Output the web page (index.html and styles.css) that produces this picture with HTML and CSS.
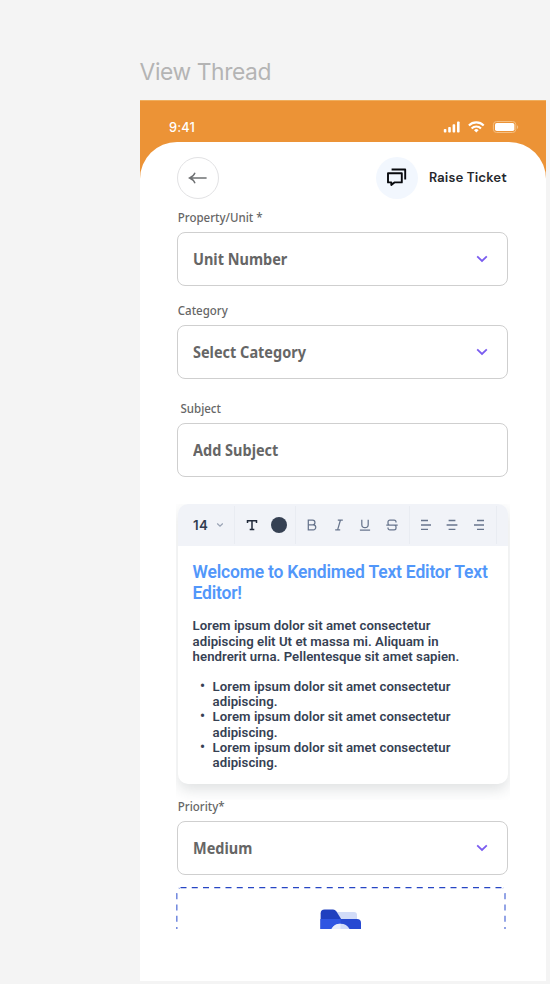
FILE: index.html
```html
<!DOCTYPE html>
<html lang="en">
<head>
<meta charset="utf-8">
<title>View Thread</title>
<link rel="stylesheet" href="styles.css">
</head>
<body>
<h1 class="frame-title">View Thread</h1>
<main class="phone">
  <header class="status">
    <span class="time">9:41</span>
    <svg class="status-icons" width="76" height="14" viewBox="0 0 76 14">
      <g fill="#fff">
        <rect x="0.8" y="9" width="2.6" height="3.6" rx=".8"/>
        <rect x="5.2" y="7" width="2.6" height="5.6" rx=".8"/>
        <rect x="9.6" y="4.2" width="2.6" height="8.4" rx=".8"/>
        <rect x="14" y="1.4" width="2.6" height="11.2" rx=".8"/>
      </g>
      <g fill="none" stroke="#fff" stroke-width="2.1">
        <path d="M25.9 5.5a10.3 10.3 0 0 1 14.8 0"/>
        <path d="M28.6 8.4a6.6 6.6 0 0 1 9.4 0"/>
      </g>
      <path d="M33.3 12.6l-2.3-2.4a3.3 3.3 0 0 1 4.6 0z" fill="#fff"/>
      <rect x="50.4" y="1.5" width="22.4" height="11" rx="3.2" fill="none" stroke="#f5c083" stroke-width="1"/>
      <rect x="52" y="3" width="19.4" height="8" rx="1.8" fill="#fff"/>
      <path d="M74 5.2v3.8q1.2-.6 1.2-1.9t-1.2-1.9z" fill="#f5c083"/>
    </svg>
  </header>
  <section class="sheet">
    <nav class="nav">
      <span class="back"><svg width="20" height="14" viewBox="0 0 20 14" fill="none" stroke="#6f7173" stroke-width="1.4"><path d="M18.6 7H2M7 1.800Q5.800 5.200 1.600 7Q5.800 8.800 7 12.200"/></svg></span>
      <span class="chat"><svg width="22" height="22" viewBox="0 0 22 22" fill="none" stroke="#080a0e" stroke-width="1.900" stroke-linejoin="round"><path d="M2 6.200h13.800v9.200H8.400L5.300 18v-2.600H2z"/><path d="M5.600 2.500h13.600v9.900"/></svg></span>
      <span class="nav-title">Raise Ticket</span>
    </nav>

    <div class="field f-unit"><label>Property/Unit *</label><div class="box"><span>Unit Number</span><svg class="chev" width="12" height="8" viewBox="0 0 12 8"><path d="M1.200 1.300L6 5.900L10.800 1.300"/></svg></div></div>
    <div class="field f-category"><label>Category</label><div class="box"><span>Select Category</span><svg class="chev" width="12" height="8" viewBox="0 0 12 8"><path d="M1.200 1.300L6 5.900L10.800 1.300"/></svg></div></div>
    <div class="field f-subject"><label>Subject</label><div class="box"><span>Add Subject</span></div></div>

    <div class="editor-wrap">
      <div class="editor">
        <div class="toolbar">
          <div class="group g-size"><span class="size">14</span><svg width="8" height="6" viewBox="0 0 8 6" fill="none" stroke="#9aa4b5" stroke-width="1.300"><path d="M1.200 1.500L4 4.200L6.800 1.500"/></svg></div>
          <div class="group g-color">
            <svg width="12" height="12" viewBox="0 0 12 12" fill="none" stroke="#20293a" stroke-width="1.500"><path d="M1.500 4V1.700h9V4M6 1.700v8.800M3.700 10.500h4.600"/></svg>
            <i class="swatch"></i>
          </div>
          <div class="group g-style">
            <svg width="12" height="12" viewBox="0 0 12 12"><path d="M2.300 1.200h4.300a2.300 2.300 0 0 1 0 4.700H2.300zM2.300 5.900h5a2.400 2.400 0 0 1 0 4.900h-5z"/></svg>
            <svg width="12" height="12" viewBox="0 0 12 12"><path d="M4.800 1.200h5M2.200 10.800h5M7.400 1.200L4.600 10.800"/></svg>
            <svg width="12" height="12" viewBox="0 0 12 12"><path d="M2.800 .8v4.600a3.200 3.200 0 0 0 6.400 0V.8M.9 11.200h10.200"/></svg>
            <svg width="12" height="12" viewBox="0 0 12 12"><path d="M10 3.600V3a1.900 1.900 0 0 0-1.900-1.900H3.900A1.900 1.900 0 0 0 2 3v1.200A1.800 1.800 0 0 0 3.800 6h4.400A1.800 1.800 0 0 1 10 7.800V9a1.900 1.900 0 0 1-1.900 1.900H3.900A1.900 1.900 0 0 1 2 9v-.6M.3 6h11.400"/></svg>
          </div>
          <div class="group g-align">
            <svg width="12" height="12" viewBox="0 0 12 12"><path d="M1 1.500h7M1 6h10M1 10.300h7"/></svg>
            <svg width="12" height="12" viewBox="0 0 12 12"><path d="M2.600 1.500h6.800M.6 6h10.800M2.600 10.300h6.800"/></svg>
            <svg width="12" height="12" viewBox="0 0 12 12"><path d="M4 1.500h7M1 6h10M4 10.300h7"/></svg>
          </div>
        </div>
        <div class="copy">
          <h2>Welcome to Kendimed Text Editor Text<br>Editor!</h2>
          <p>Lorem ipsum dolor sit amet consectetur<br>adipiscing elit Ut et massa mi. Aliquam in<br>hendrerit urna. Pellentesque sit amet sapien.</p>
          <ul>
            <li>Lorem ipsum dolor sit amet consectetur<br>adipiscing.</li>
            <li>Lorem ipsum dolor sit amet consectetur<br>adipiscing.</li>
            <li>Lorem ipsum dolor sit amet consectetur<br>adipiscing.</li>
          </ul>
        </div>
      </div>
    </div>

    <div class="field f-priority"><label>Priority*</label><div class="box"><span>Medium</span><svg class="chev" width="12" height="8" viewBox="0 0 12 8"><path d="M1.200 1.300L6 5.900L10.800 1.300"/></svg></div></div>

    <svg class="upload" width="332" height="42" viewBox="0 0 332 42">
      <path d="M4.500 .6H327" fill="none" stroke="#2746c4" stroke-width="1.200" stroke-dasharray="6 5.250"/>
      <path d="M.8 43V7Q.8 3 3.500 1M329 43V7Q329 3 327 1" fill="none" stroke="#7087de" stroke-width="1.500" stroke-dasharray="6 5.250" stroke-dashoffset="3"/>
      <path d="M158 25h20a3 3 0 0 1 3 3v10h-23z" fill="#d2dcf8"/>
      <path d="M144.600 43V26.500a4 4 0 0 1 4-4h8.500q2 0 3.200 1.700l4.800 7.800V43z" fill="#2040bf"/>
      <path d="M144.600 32h36.400a4 4 0 0 1 4 4v8H144.600z" fill="#2749d2"/>
      <path d="M144.600 32h20v12h-20z" fill="#3056e2"/>
      <path d="M155 43a10.300 10.300 0 0 1 19 0z" fill="#d2dcf8"/>
      <path d="M155 43a10.300 10.300 0 0 1 9.500-6.200v6.200z" fill="#e9eefb"/>
    </svg>
  </section>
</main>
</body>
</html>
```
FILE: styles.css
```css
* { box-sizing: border-box; }
body { margin: 0; height: 984px; overflow: hidden; background: #f4f4f4; padding-left: 139.6px; }
.frame-title { margin: 0; height: 100px; padding-top: 58px; font: 400 22.8px/28px Inter, sans-serif; letter-spacing: -.4px; color: #b4b4b4; white-space: nowrap; }
.phone { width: 406.600px; height: 881px; background: #ec9336; border-top: 1px solid #efae5e; }
.status { height: 41px; display: flex; align-items: flex-start; justify-content: space-between; padding: 19px 27.500px 0 29.400px; }
.time { font: 500 12.800px/15px Inter, sans-serif; letter-spacing: .2px; color: #fff; }
.sheet { height: 839px; background: #fff; border-radius: 37px 37px 0 0; padding: 15px 37.400px 0 37.400px; }
.nav { height: 42px; display: flex; align-items: center; }
.back, .chat { width: 42px; height: 42px; border-radius: 50%; display: flex; align-items: center; justify-content: center; }
.back { border: 1px solid #e2e2e4; }
.chat { background: #f2f7fe; margin-left: 157.500px; }
.nav-title { margin-left: 10.500px; font: 600 13.300px/18px "DM Sans", Inter, sans-serif; letter-spacing: .1px; color: #25272b; white-space: nowrap; }
.field { color: #666; font-family: "Noto Sans", sans-serif; }
.field label { display: block; height: 16px; font-size: 11.700px; line-height: 17px; font-weight: 500; padding-left: .8px; transform: scaleX(.985); transform-origin: left; }
.box { width: 331.500px; height: 54px; margin-top: 6.500px; border: 1px solid #cfcfcf; border-radius: 8px; display: flex; align-items: center; justify-content: space-between; padding: 0 19.600px 0 14.800px; font-size: 16px; font-weight: 700; }
.box span { transform: scaleX(.905); transform-origin: left; }
.chev { fill: none; stroke: #7a5cf0; stroke-width: 1.800; }
.f-unit { margin-top: 10px; }
.f-category { margin-top: 16.500px; }
.f-subject { margin-top: 21.500px; }
.f-subject label { padding-left: 3.500px; }
.editor-wrap { width: 334.400px; height: 296px; margin: 27px 0 0 -1.400px; padding: 0 2px; overflow: hidden; }
.editor { height: 280.500px; background: #fff; border-radius: 10px; overflow: hidden; box-shadow: 0 6px 14px rgba(50,60,65,.15); }
.toolbar { height: 42px; background: #f1f3f8; display: flex; align-items: center; }
.group { height: 38px; display: flex; align-items: center; border-right: 1px solid #e9ecf2; }
.g-size { width: 57.600px; padding-left: 15.400px; gap: 7.500px; }
.size { font: 600 13.300px/16px Inter, sans-serif; letter-spacing: .3px; color: #323d50; }
.g-color { width: 60.400px; padding-left: 11px; gap: 12.500px; }
.swatch { width: 16px; height: 16px; border-radius: 50%; background: #364153; }
.g-style { width: 114px; padding-left: 10.600px; gap: 14.500px; fill: none; stroke: #68758d; stroke-width: 1.250; }
.g-align { width: 87px; padding-left: 10.300px; gap: 14.600px; fill: none; stroke: #68758d; stroke-width: 1.300; }
.copy { padding: 16.300px 0 0 15px; color: #364153; font: 600 13.200px/15.200px Roboto, sans-serif; letter-spacing: .04px; white-space: nowrap; }
.copy h2 { margin: 0; color: #5297fa; font-size: 17.500px; line-height: 20.800px; font-weight: 600; letter-spacing: -.2px; }
.copy p { margin: 15px 0; }
.copy ul { margin: 0; padding-left: 20px; list-style: none; }
.copy li { display: block; }
.copy li::before { content: "•"; float: left; margin-left: -12.500px; font-size: 14px; }
.f-priority { margin-top: -1.500px; }
.f-priority .box { margin-top: 7px; }
.upload { display: block; margin: 11.500px 0 0 -1px; }
```
